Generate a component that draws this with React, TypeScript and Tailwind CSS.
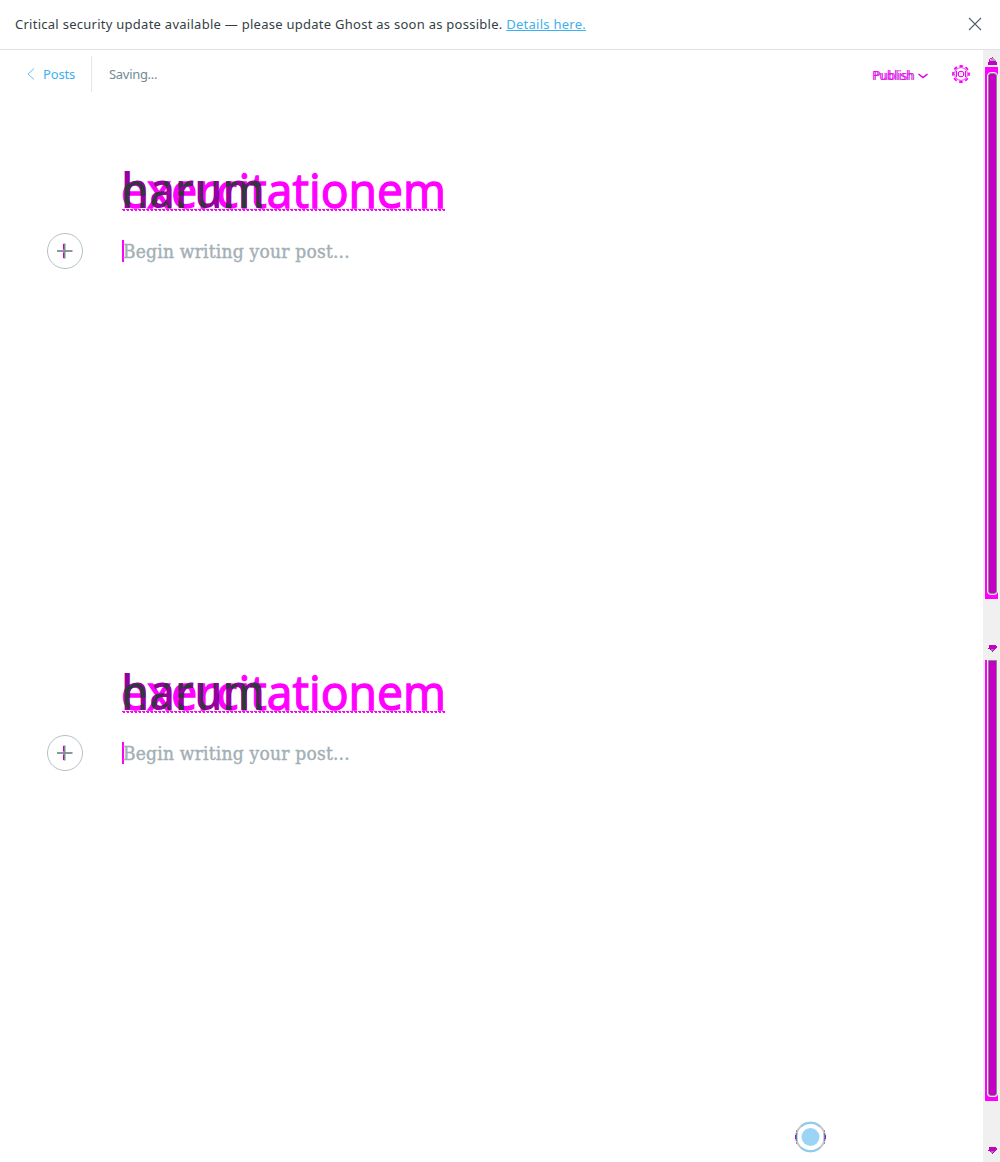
import React from 'react';

function Gear() {
  return (
    <svg width="20" height="18" viewBox="0 0 20 18" fill="none">
      <g transform="translate(10 9)">
        <circle r="6.4" stroke="#e830e8" strokeWidth="1" />
        <circle r="8" stroke="#f0f" strokeWidth="1.8" strokeDasharray="3.6 2.683" strokeDashoffset="1.8" />
        <circle r="2.8" stroke="#d800d8" strokeWidth="1.1" />
        <path d="M-4.5 -3v6M4.5 -3v6" stroke="#f0f" />
        <path d="M-6.5 -2v4M6.5 -2v4M0 -1.5v3" stroke="#aaa" strokeWidth=".8" />
      </g>
    </svg>
  );
}

function UpArrow() {
  return (
    <svg className="ml-px shrink-0" width="9" height="8" viewBox="0 0 9 8" shapeRendering="crispEdges">
      <path d="M4 1h2v1h1v1h1v1H2V3h1V2h1z" fill="#a6a6a6" />
      <path d="M1 4h7v1h1v3H0V5h1z" fill="#c400c4" />
      <path d="M4 0h1v1H4zM2 1h2v1H2zM1 2h1v2H1z" fill="#f0f" />
    </svg>
  );
}

function DownArrow() {
  return (
    <svg className="ml-px shrink-0" width="9" height="8" viewBox="0 0 9 8" shapeRendering="crispEdges">
      <path d="M1 0h7v1h1v2H8v1H7v1H6v1H5v1H4V6H3V5H2V4H0V3h1z" fill="#c400c4" />
      <path d="M3 4h3v1H5v1H3z" fill="#9a7a9a" />
    </svg>
  );
}

function Title({ id }: { id: string }) {
  return (
    <svg
      className="ml-[75px] block overflow-visible font-['Open_Sans','Noto_Sans',sans-serif] text-[48px]"
      width="326"
      height="56"
      viewBox="0 0 326 56"
    >
      <mask id={id} maskUnits="userSpaceOnUse" x="-5" y="0" width="336" height="56">
        <text x="-1" y="43" fontWeight="400" textLength="325" lengthAdjust="spacingAndGlyphs" fill="#fff" stroke="#fff" strokeWidth="1.3">
          exercitationem
        </text>
      </mask>
      <text x="-1" y="43" fontWeight="400" textLength="325" lengthAdjust="spacingAndGlyphs" fill="#ff00ff" stroke="#ff00ff" strokeWidth="1.3">
        exercitationem
      </text>
      <text x="-1" y="43" fontWeight="600" textLength="144" lengthAdjust="spacingAndGlyphs" fill="#9600a0">
        harum
      </text>
      <g mask={`url(#${id})`}>
        <text x="-1" y="43" fontWeight="600" textLength="144" lengthAdjust="spacingAndGlyphs" fill="#30383c">
          harum
        </text>
      </g>
      <g shapeRendering="crispEdges" stroke="#ff00ff">
        <path d="M0 44.5h324" strokeDasharray="3 1" />
        <path d="M1 45.5h323" strokeDasharray="2 2" />
      </g>
    </svg>
  );
}

function Editor({ id }: { id: string }) {
  return (
    <section className="pl-[47px]">
      <Title id={id} />
      <div className="mt-[12px] flex h-[36px] items-center">
        <svg width="36" height="36" viewBox="0 0 36 36" fill="none">
          <circle cx="18" cy="18" r="17.5" stroke="#b3c0c6" />
          <path d="M10 18h15.500" stroke="#8b979d" strokeWidth="2" />
          <path d="M17.500 10.500v15" stroke="#7d8b92" strokeWidth="2" />
          <path d="M16.500 11v5.500M16.500 19.500v5.500" stroke="#c400c4" strokeWidth="1" />
        </svg>
        <span className="ml-[39px] h-[22px] w-[2px] bg-[#f0f]" />
        <p className="-ml-px pb-px whitespace-nowrap font-['DejaVu_Serif_Condensed','DejaVu_Serif',serif] text-[19px] leading-[24px] tracking-[0.22px] text-[#a3afb5] [-webkit-text-stroke:0.4px_#a3afb5]">
          Begin writing your post...
        </p>
      </div>
    </section>
  );
}

export default function App() {
  return (
    <div className="relative flex h-[1162px] w-[1000px] flex-col overflow-hidden bg-white font-['Noto_Sans','Open_Sans',sans-serif] text-[#343f44]">
      <header className="flex h-[50px] shrink-0 items-center justify-between border-b border-[#dfe1e3] pr-[18px] pl-[15px] text-[13px]">
        <p className="whitespace-nowrap tracking-[0.265px]">
          Critical security update available — please update Ghost as soon as possible.{' '}
          <a className="text-[#3eb0ef] underline underline-offset-1">Details here.</a>
        </p>
        <svg className="mt-[-2px]" width="14" height="14" viewBox="0 0 14 14" stroke="#55606a" strokeWidth="1.1">
          <path d="M1 1l12 12M13 1L1 13" />
        </svg>
      </header>
      <div className="flex min-h-0 grow">
        <main className="w-[983px]">
          <nav className="flex h-[49px] items-center pt-px pr-[12px] text-[13px]">
            <svg className="mt-[-2px] ml-[27px]" width="8" height="12" viewBox="0 0 8 12" fill="none">
              <path d="M7 .5L1 6l6 5.5" stroke="#3eb0ef" strokeWidth=".8" />
            </svg>
            <a className="ml-[8px] w-[48px] tracking-[-0.15px] text-[#3eb0ef]">Posts</a>
            <span className="mt-[-3px] h-[36px] w-px bg-[#dfe8ee]" />
            <span className="ml-[17px] tracking-[-0.3px] text-[#738a94]">Saving...</span>
            <div className="mt-[2px] ml-auto h-[20px] w-[45px] text-[12px] leading-[20px] text-[#f0f] [text-shadow:1.5px_0_0_#a840c8]">
              Publish
            </div>
            <svg className="mt-px ml-px" width="10" height="6" viewBox="0 0 10 6" fill="none">
              <path d="M.5 1L5 4.500 9.500 1" stroke="#d800d8" strokeWidth="1.500" />
            </svg>
            <span className="mt-[-3px] ml-[23px]">
              <Gear />
            </span>
          </nav>
          <div className="flex flex-col gap-[398px] pt-[66px]">
            <Editor id="title-overlap-a" />
            <Editor id="title-overlap-b" />
          </div>
        </main>
        <aside className="flex w-[17px] flex-col items-center bg-[#f0f0f0] pt-[7px]">
          <UpArrow />
          <div className="mt-[2px] mr-[2px] ml-px flex h-[532px] w-[13px] shrink-0 bg-[#f0f] pt-[5px] pb-[4px] pl-[2px]">
            <div className="w-[11px] rounded-[4px] border border-[#f0f0f0] bg-[#f0f0f0]">
              <div className="h-full rounded-[3px] border border-[#8a8a8a] bg-[#c400c4]" />
            </div>
          </div>
          <div className="mt-[46px]">
            <DownArrow />
          </div>
          <div className="mt-[7px] mr-[2px] ml-px flex h-[441px] w-[13px] shrink-0 bg-[#f0f] pb-[4px] pl-[2px]">
            <div className="w-[11px] rounded-b-[4px] border-x border-b border-[#f0f0f0] bg-[#f0f0f0]">
              <div className="h-full rounded-b-[3px] border border-[#8a8a8a] bg-[#c400c4]" />
            </div>
          </div>
          <div className="mt-[46px]">
            <DownArrow />
          </div>
        </aside>
      </div>
      <svg className="absolute top-[1121px] left-[795px]" width="31" height="32" viewBox="0 0 31 32" fill="none">
        <circle cx="15.500" cy="16" r="14.300" stroke="#c5c5c5" strokeWidth="2" />
        <path d="M6 5.500a14.200 14.200 0 0 1 19 0M6 26.500a14.200 14.200 0 0 0 19 0" stroke="#8fcbee" strokeWidth="2" />
        <path d="M1.500 12v8M29.500 12v8" stroke="#4b8fb5" strokeWidth="1.500" />
        <path d="M.5 14v4M30.500 14v4M1 10h1M29 10h1M1 22h1M29 22h1" stroke="#c400c4" />
        <circle cx="15.500" cy="16" r="9" fill="#9bd4f5" />
      </svg>
    </div>
  );
}
